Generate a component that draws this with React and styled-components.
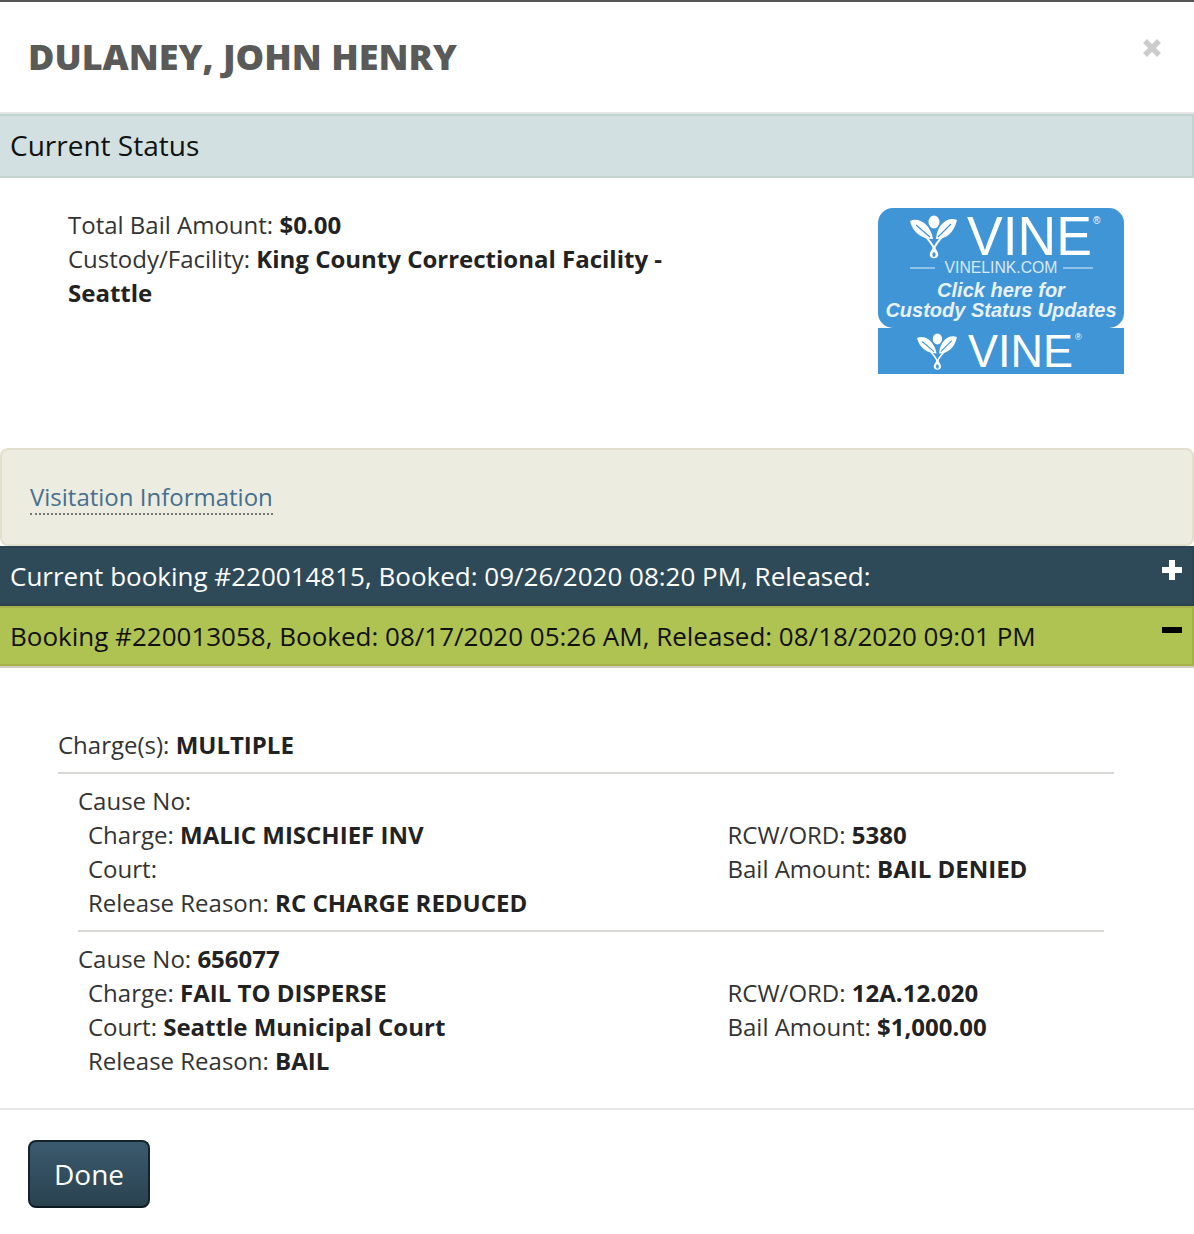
import React from 'react';
import styled, { createGlobalStyle } from 'styled-components';

const GlobalStyle = createGlobalStyle`
  html, body {
    margin: 0;
    padding: 0;
    background: #fff;
  }
  body {
    font-family: 'Open Sans', 'Liberation Sans', sans-serif;
    font-size: 24px;
    line-height: 34px;
    color: #333;
  }
`;

const Modal = styled.div`
  width: 1194px;
  height: 1234px;
  box-sizing: border-box;
  border-top: 2px solid #555;
  overflow: hidden;
  background: #fff;
`;

const Header = styled.div`
  height: 112px;
  box-sizing: border-box;
  padding: 0 28px;
  display: flex;
  align-items: center;
  justify-content: space-between;
  border-bottom: 2px solid #e5e5e5;
`;

const Title = styled.h3`
  margin: 0;
  font-size: 36px;
  font-weight: 800;
  line-height: 40px;
  color: #5a5a58;
`;

const Close = styled.svg`
  width: 20px;
  height: 20px;
  margin: -18px 4px 0 0;
`;

const StatusBar = styled.div`
  height: 64px;
  box-sizing: border-box;
  display: flex;
  align-items: center;
  padding: 0 10px 2px;
  background: #d2e0e1;
  border: 2px solid #c2d4d0;
  border-left: none;
  font-size: 28px;
  color: #111;
`;

const StatusBody = styled.div`
  height: 270px;
  box-sizing: border-box;
  padding: 30px 70px 0 68px;
  display: flex;
  justify-content: space-between;
`;

const StatusText = styled.div`
  width: 620px;
`;

const Strong = styled.strong`
  font-weight: 700;
  color: #222;
`;

const VineLink = styled.div`
  display: flex;
  flex-direction: column;
  width: 246px;
`;

const VineTop = styled.svg`
  display: block;
  width: 246px;
  height: 120px;
  overflow: visible;
`;

const VineBottom = styled.svg`
  display: block;
  width: 246px;
  height: 46px;
  overflow: visible;
`;

const Well = styled.div`
  height: 98px;
  box-sizing: border-box;
  padding: 0 28px;
  display: flex;
  align-items: center;
  background: #edece0;
  border: 2px solid #e2e0cd;
  border-radius: 8px;
`;

const VisitLink = styled.a`
  color: #45708f;
  font-size: 24px;
  line-height: 32px;
  border-bottom: 2px dotted #777;
  margin-top: 2px;
`;

const BookingBar = styled.div`
  height: 60px;
  box-sizing: border-box;
  display: flex;
  align-items: flex-start;
  justify-content: space-between;
  padding: 11px 9px 0 10px;
  font-size: 26px;
  background: ${p => p.$open ? '#afc353' : '#2e4a59'};
  color: ${p => p.$open ? '#111' : '#fff'};
  border: 2px solid ${p => p.$open ? '#a6b04a' : '#2a4452'};
  border-left: none;
  box-shadow: ${p => p.$open ? '0 2px 0 #cfccc0' : 'none'};
`;

const BarIcon = styled.svg`
  width: 22px;
  height: 22px;
  flex: none;
`;

const Charges = styled.div`
  height: 444px;
  box-sizing: border-box;
  padding: 62px 80px 0 58px;
  border-bottom: 2px solid #e5e5e5;
`;

const ChargeHead = styled.div`
  padding-bottom: 10px;
  border-bottom: 2px solid #d8d8d4;
`;

const Cause = styled.div`
  padding: 10px 10px 10px 20px;
  & + & {
    padding-top: 0;
  }
`;

const CauseGrid = styled.div`
  display: grid;
  grid-template-columns: 639.5px 1fr;
  padding-left: 10px;
  padding-bottom: 10px;
  ${p => p.$divided && 'border-bottom: 2px solid #d8d8d4;'}
`;

const Footer = styled.div`
  padding: 30px 28px;
`;

const DoneButton = styled.button`
  width: 122px;
  height: 68px;
  border-radius: 8px;
  border: 2px solid #14242c;
  border-bottom-color: #0c1a1f;
  background: linear-gradient(#3a5a6d, #2a4250);
  color: #fff;
  font-family: 'Open Sans', sans-serif;
  font-size: 28px;
  padding: 0;
`;

const BLUE = '#4095d6';
const SANS = "'Liberation Sans', sans-serif";

const Sprout = ({ x, y, s }) => (
  <g transform={`translate(${x} ${y}) scale(${s})`} fill="#fff">
    <ellipse cx="24" cy="7" rx="5.5" ry="6.5" />
    <path d="M0 6C8 2 20 8 23 24 12 24 3 18 0 6z" />
    <path d="M47 5C39 1 27 8 26 24 36 24 44 18 47 5z" />
    <path d="M6 10L20 22M41 9L28 22" stroke={BLUE} strokeWidth="1.2" fill="none" />
    <path d="M14 20C20 26 23 30 24 34M34 20C28 26 25 30 24 34" stroke="#fff" strokeWidth="2" fill="none" />
    <path d="M24 31C21 36 19 38 20 41 21 44 27 44 28 41 29 38 27 36 24 31z" />
    <ellipse cx="24" cy="39.5" rx="1.6" ry="2.6" fill={BLUE} />
  </g>
);

export default function App() {
  return (
    <Modal>
      <GlobalStyle />
      <Header>
        <Title>DULANEY, JOHN HENRY</Title>
        <Close viewBox="0 0 20 20">
          <path d="M3 3l14 14M17 3L3 17" stroke="#ccc" strokeWidth="5.5" />
        </Close>
      </Header>
      <StatusBar>Current Status</StatusBar>
      <StatusBody>
        <StatusText>
          <div>Total Bail Amount: <Strong>$0.00</Strong></div>
          <div>Custody/Facility: <Strong>King County Correctional Facility - Seattle</Strong></div>
        </StatusText>
        <VineLink>
          <VineTop viewBox="0 0 246 120">
            <rect width="246" height="120" rx="15" fill={BLUE} />
            <Sprout x={32} y={7} s={1} />
            <text x={89} y={47} fontFamily={SANS} fontSize="55" fill="#fff" textLength="125" lengthAdjust="spacingAndGlyphs">VINE</text>
            <text x={215} y={16} fontFamily={SANS} fontSize="10" fill="#fff">®</text>
            <path d="M32 60h25M185 60h30" stroke="#a9d0ee" strokeWidth="1.5" />
            <text x={123} y={65} textAnchor="middle" fontFamily={SANS} fontSize="16" fill="#d8e9f7" textLength="113" lengthAdjust="spacingAndGlyphs">VINELINK.COM</text>
            <text x={123} y={89} textAnchor="middle" fontFamily={SANS} fontSize="20" fontStyle="italic" fontWeight="700" fill="#e8f2fb">Click here for</text>
            <text x={123} y={109} textAnchor="middle" fontFamily={SANS} fontSize="20" fontStyle="italic" fontWeight="700" fill="#e8f2fb">Custody Status Updates</text>
          </VineTop>
          <VineBottom viewBox="0 0 246 46">
            <rect width="246" height="46" fill={BLUE} />
            <Sprout x={39} y={5} s={0.85} />
            <text x={90} y={39} fontFamily={SANS} fontSize="47" fill="#fff" textLength="105" lengthAdjust="spacingAndGlyphs">VINE</text>
            <text x={197} y={12} fontFamily={SANS} fontSize="9" fill="#fff">®</text>
          </VineBottom>
        </VineLink>
      </StatusBody>
      <Well>
        <VisitLink>Visitation Information</VisitLink>
      </Well>
      <BookingBar>
        <span>Current booking #220014815, Booked: 09/26/2020 08:20 PM, Released:</span>
        <BarIcon viewBox="0 0 22 22">
          <path d="M11 1v20M1 11h20" stroke="#fff" strokeWidth="6" />
        </BarIcon>
      </BookingBar>
      <BookingBar $open>
        <span>Booking #220013058, Booked: 08/17/2020 05:26 AM, Released: 08/18/2020 09:01 PM</span>
        <BarIcon viewBox="0 0 22 22">
          <path d="M1 11h20" stroke="#000" strokeWidth="6" />
        </BarIcon>
      </BookingBar>
      <Charges>
        <ChargeHead>Charge(s): <Strong>MULTIPLE</Strong></ChargeHead>
        <Cause>
          <div>Cause No:</div>
          <CauseGrid $divided>
            <div>Charge: <Strong>MALIC MISCHIEF INV</Strong></div>
            <div>RCW/ORD: <Strong>5380</Strong></div>
            <div>Court:</div>
            <div>Bail Amount: <Strong>BAIL DENIED</Strong></div>
            <div>Release Reason: <Strong>RC CHARGE REDUCED</Strong></div>
          </CauseGrid>
        </Cause>
        <Cause>
          <div>Cause No: <Strong>656077</Strong></div>
          <CauseGrid>
            <div>Charge: <Strong>FAIL TO DISPERSE</Strong></div>
            <div>RCW/ORD: <Strong>12A.12.020</Strong></div>
            <div>Court: <Strong>Seattle Municipal Court</Strong></div>
            <div>Bail Amount: <Strong>$1,000.00</Strong></div>
            <div>Release Reason: <Strong>BAIL</Strong></div>
          </CauseGrid>
        </Cause>
      </Charges>
      <Footer>
        <DoneButton>Done</DoneButton>
      </Footer>
    </Modal>
  );
}
